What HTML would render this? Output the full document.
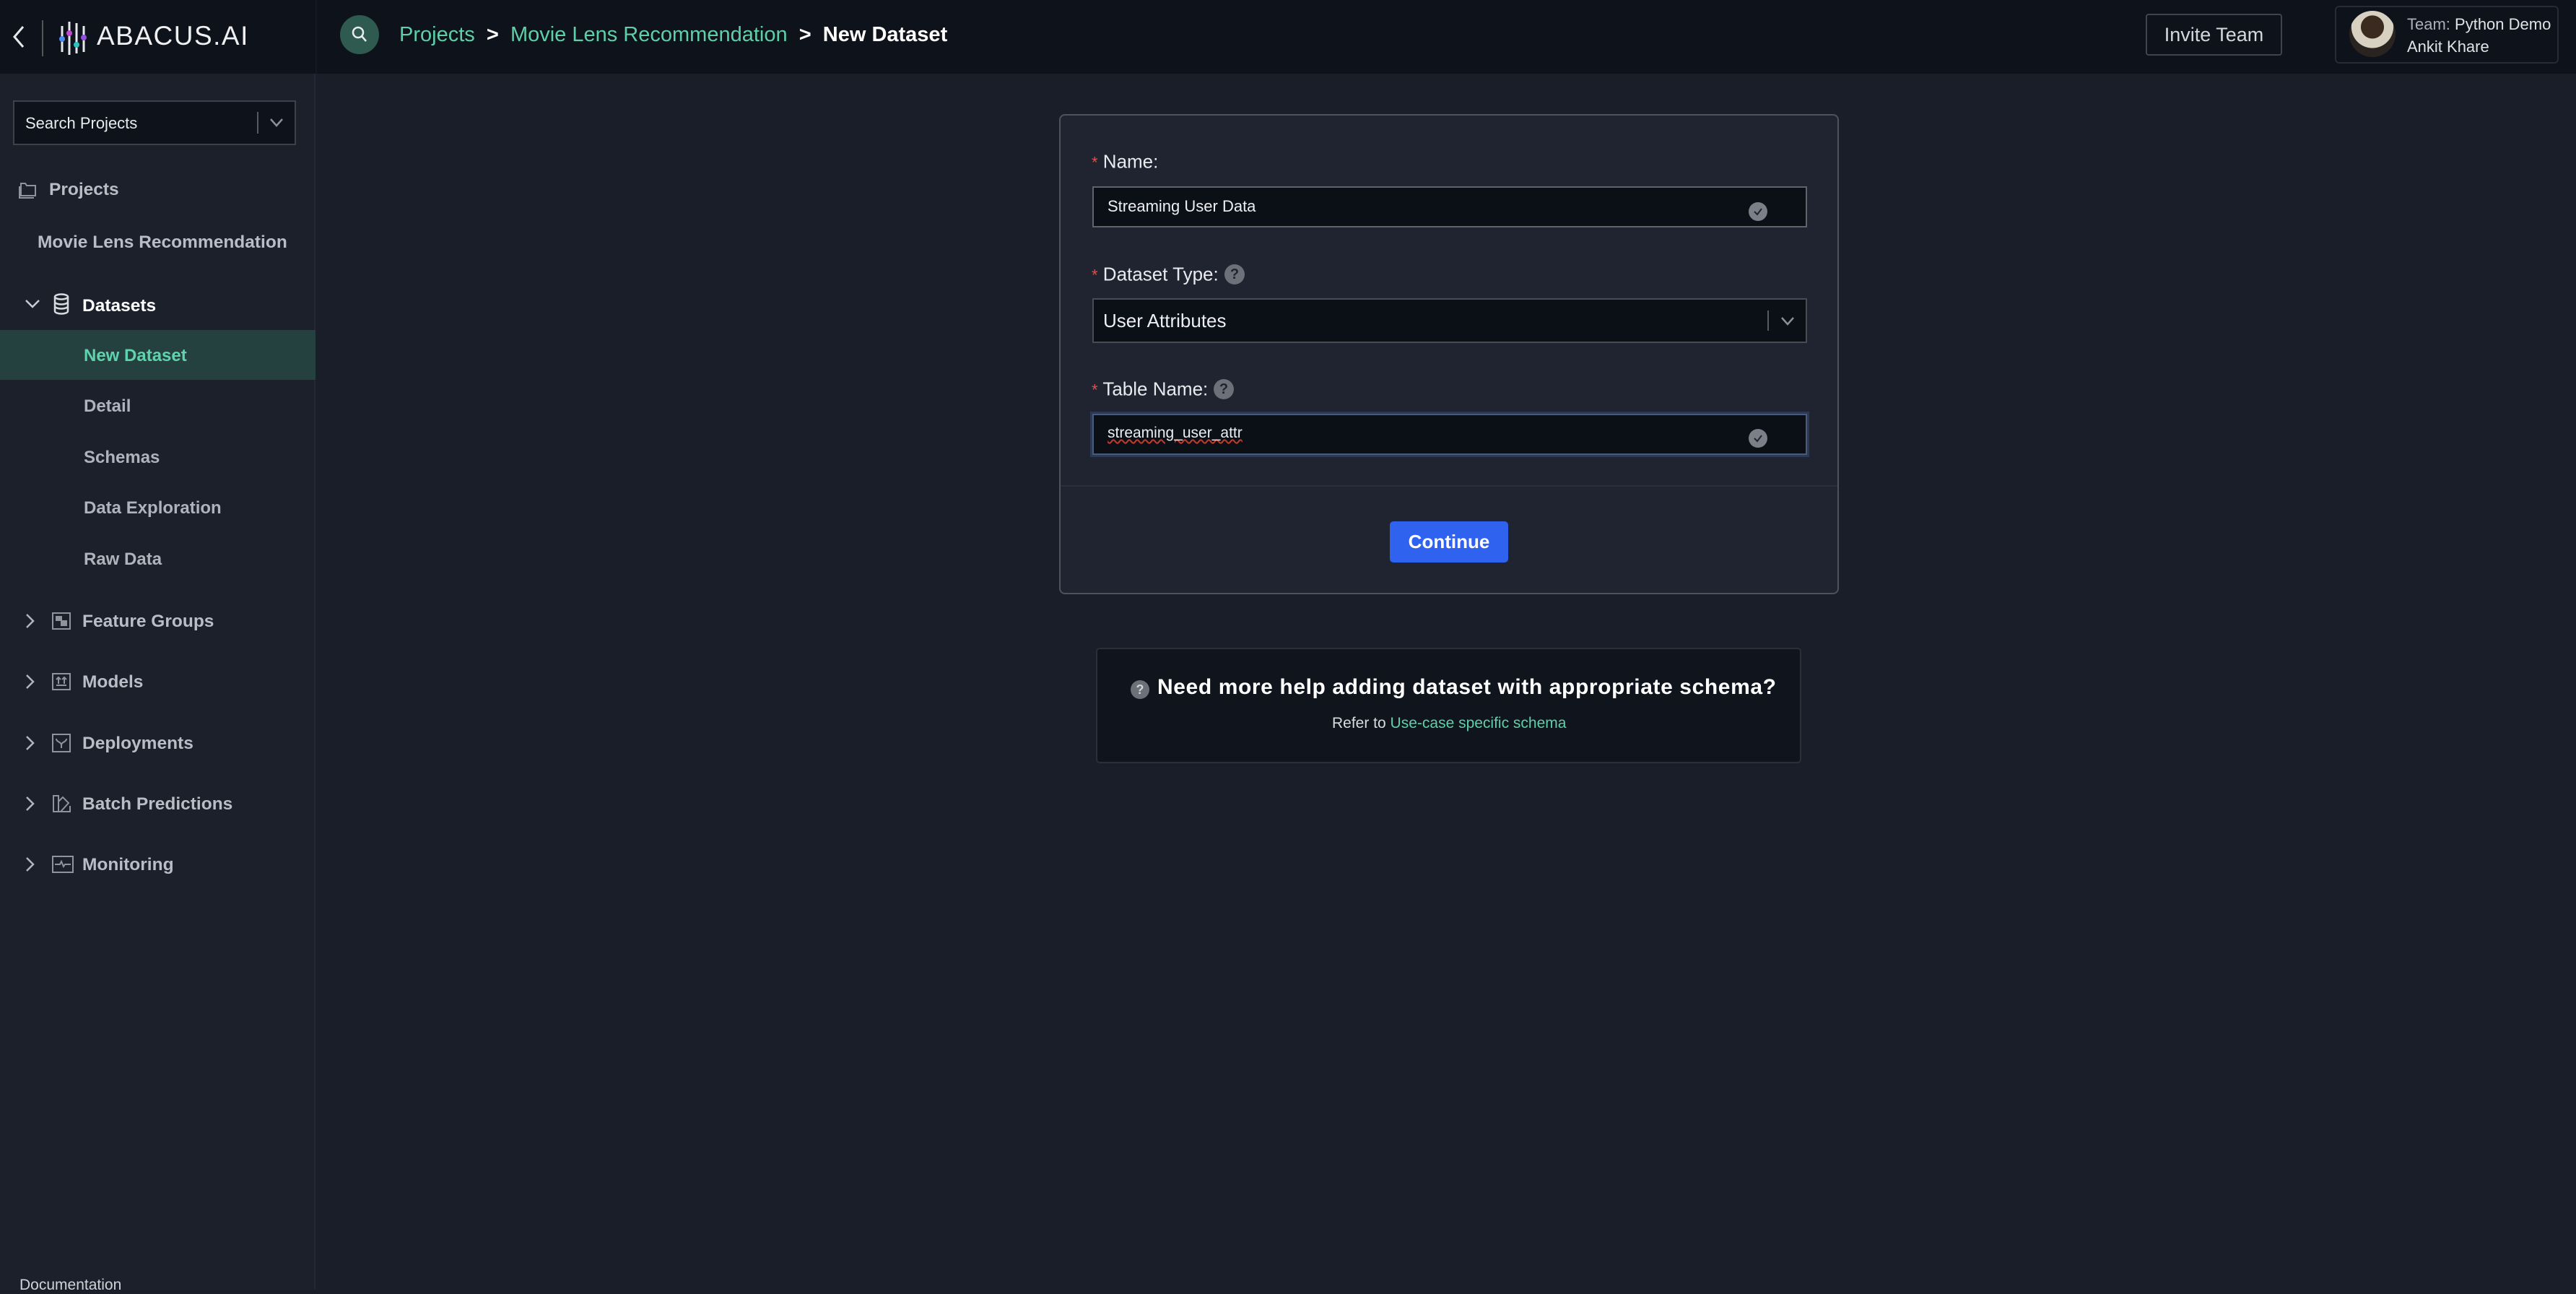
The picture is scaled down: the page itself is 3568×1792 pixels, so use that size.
<!DOCTYPE html>
<html><head><meta charset="utf-8"><style>
*{margin:0;padding:0;box-sizing:border-box}
body{width:3568px;height:1786px;background:#191e28;font-family:"Liberation Sans",sans-serif;position:relative;overflow:hidden;color:#fff}
.a{position:absolute;white-space:nowrap}
.hdr{left:0;top:0;width:3568px;height:102px;background:#0e121a}
.sb{left:0;top:102px;width:437px;height:1684px;background:#1b202b;border-right:2px solid #232834}
.nav{font-size:24.5px;font-weight:bold;color:#b9bdc6;transform:translateY(-50%)}
.sub{font-size:24px;font-weight:bold;color:#aeb3bc;left:116px;transform:translateY(-50%)}
.chev{left:34px;transform:translateY(-50%)}
.ic{left:72px;transform:translateY(-50%)}
.lbl{font-size:26px;color:#e8eaee;transform:translateY(-50%)}
.ast{color:#d9534f;font-size:22px}
.inp{background:#0b0f16;border:2px solid #5e636c}
.q{width:28px;height:28px;border-radius:50%;background:#6b7079;color:#1f2430;font-size:20px;font-weight:bold;text-align:center;line-height:28px}
.ok{width:26px;height:26px;border-radius:50%;background:#7a7f88}
</style></head><body>
<div class="a hdr"></div>
<div class="a" style="left:437px;top:0;width:2px;height:102px;background:#151a22"></div>
<svg class="a" style="left:14px;top:34px" width="24" height="34"><path d="M18 3 L6 17 L18 31" stroke="#e6e8ec" stroke-width="3" fill="none"/></svg>
<div class="a" style="left:58px;top:28px;width:2px;height:50px;background:#555"></div>
<svg class="a" style="left:82px;top:30px" width="40" height="46">
<g stroke="#e6e8ec" stroke-width="3"><line x1="4" y1="6" x2="4" y2="42"/><line x1="14" y1="0" x2="14" y2="46"/><line x1="24" y1="2" x2="24" y2="44"/><line x1="34" y1="6" x2="34" y2="42"/></g>
<circle cx="4" cy="24" r="4" fill="#4a8cf0"/><circle cx="14" cy="16" r="4" fill="#c04ad0"/><circle cx="24" cy="32" r="4" fill="#30c0c0"/><circle cx="34" cy="22" r="4" fill="#9050e0"/></svg>
<div class="a" style="left:134px;top:29px;font-size:37px;letter-spacing:1.5px;color:#f0f0f2">ABACUS.AI</div>
<div class="a" style="left:471px;top:21px;width:54px;height:54px;border-radius:50%;background:#2e5a50"></div>
<svg class="a" style="left:485px;top:34px" width="28" height="28"><circle cx="11" cy="11" r="7" stroke="#e8ecec" stroke-width="2.5" fill="none"/><line x1="16" y1="16" x2="22" y2="23" stroke="#e8ecec" stroke-width="2.5"/></svg>
<div class="a" style="left:553px;top:32px;font-size:29px;color:#5fcfaa">Projects <span style="color:#fff;font-weight:bold">&nbsp;&gt;&nbsp;</span> Movie Lens Recommendation <span style="color:#fff;font-weight:bold">&nbsp;&gt;&nbsp; New Dataset</span></div>
<div class="a" style="left:2972px;top:19px;width:189px;height:58px;border:2px solid #3f444d;border-radius:4px;font-size:27px;color:#d4d7dc;text-align:center;line-height:54px">Invite Team</div>
<div class="a" style="left:3234px;top:8px;width:310px;height:80px;border:2px solid #262b34;border-radius:6px"></div>
<div class="a" style="left:3254px;top:15px;width:64px;height:64px;border-radius:50%;background:radial-gradient(circle at 50% 35%,#3a2a20 0 30%,#d8d0c0 31% 55%,#2a2420 56%)"></div>
<div class="a" style="left:3334px;top:18px;font-size:22px;line-height:31px;color:#e0e2e6"><span style="color:#aab0b8">Team:</span> Python Demo<br>Ankit Khare</div>

<div class="a sb"></div>
<div class="a" style="left:18px;top:139px;width:392px;height:62px;background:#0e121a;border:2px solid #3c414a"></div>
<div class="a" style="left:35px;top:158px;font-size:22px;color:#e8eaee">Search Projects</div>
<div class="a" style="left:356px;top:155px;width:2px;height:30px;background:#555a63"></div>
<svg class="a" style="left:372px;top:162px" width="22" height="16"><path d="M3 3 L11 12 L19 3" stroke="#8a8f98" stroke-width="2.5" fill="none"/></svg>
<svg class="a" style="left:25px;top:248px" width="28" height="28"><path d="M4 6 h6 l2 3 h12 v14 h-20z M2 10 v16 h20" stroke="#8e939c" stroke-width="2" fill="none"/></svg>
<div class="a nav" style="left:68px;top:263px">Projects</div>
<div class="a nav" style="left:52px;top:336px">Movie Lens Recommendation</div>
<svg class="a chev" style="top:421px" width="22" height="16"><path d="M2 3 L11 12 L20 3" stroke="#c8ccd3" stroke-width="2.5" fill="none"/></svg>
<svg class="a" style="left:74px;top:406px" width="22" height="30"><g stroke="#d8dbe0" stroke-width="2.5" fill="none"><ellipse cx="11" cy="5" rx="9" ry="3.5"/><path d="M2 5 v20 a9 3.5 0 0 0 18 0 v-20 M2 12 a9 3.5 0 0 0 18 0 M2 18 a9 3.5 0 0 0 18 0"/></g></svg>
<div class="a nav" style="left:114px;top:424px;color:#fff">Datasets</div>
<div class="a" style="left:0;top:457px;width:437px;height:69px;background:#24403f"></div>
<div class="a sub" style="top:493px;color:#5fd3ad">New Dataset</div>
<div class="a sub" style="top:563px">Detail</div>
<div class="a sub" style="top:634px">Schemas</div>
<div class="a sub" style="top:704px">Data Exploration</div>
<div class="a sub" style="top:775px">Raw Data</div>
<svg class="a chev" style="top:860px" width="16" height="22"><path d="M3 2 L12 11 L3 20" stroke="#b0b4bc" stroke-width="2.5" fill="none"/></svg>
<svg class="a ic" style="top:860px" width="26" height="24"><rect x="1" y="1" width="24" height="22" stroke="#8e939c" stroke-width="2" fill="none"/><rect x="5" y="5" width="9" height="7" fill="#8e939c"/><rect x="12" y="11" width="9" height="8" fill="#8e939c"/></svg>
<div class="a nav" style="left:114px;top:861px">Feature Groups</div>
<svg class="a chev" style="top:944px" width="16" height="22"><path d="M3 2 L12 11 L3 20" stroke="#b0b4bc" stroke-width="2.5" fill="none"/></svg>
<svg class="a ic" style="top:944px" width="26" height="24"><rect x="1" y="1" width="24" height="22" stroke="#8e939c" stroke-width="2" fill="none"/><path d="M6 17 h14 M9 15 v-9 M6 9 l3-3 3 3 M17 15 v-9 M14 9 l3-3 3 3" stroke="#8e939c" stroke-width="2" fill="none"/></svg>
<div class="a nav" style="left:114px;top:945px">Models</div>
<svg class="a chev" style="top:1029px" width="16" height="22"><path d="M3 2 L12 11 L3 20" stroke="#b0b4bc" stroke-width="2.5" fill="none"/></svg>
<svg class="a ic" style="top:1029px" width="26" height="26"><rect x="1" y="1" width="24" height="24" stroke="#8e939c" stroke-width="2" fill="none"/><path d="M6 7 c0 5 7 4 7 9 v4 M20 7 c0 5 -7 4 -7 9" stroke="#8e939c" stroke-width="2" fill="none"/></svg>
<div class="a nav" style="left:114px;top:1030px">Deployments</div>
<svg class="a chev" style="top:1113px" width="16" height="22"><path d="M3 2 L12 11 L3 20" stroke="#b0b4bc" stroke-width="2.5" fill="none"/></svg>
<svg class="a ic" style="top:1113px" width="26" height="26"><path d="M2 2 h7 v22 h-7z M9 10 l6-6 8 8 -11 12 M9 24 h16 v-8" stroke="#8e939c" stroke-width="2" fill="none"/></svg>
<div class="a nav" style="left:114px;top:1114px">Batch Predictions</div>
<svg class="a chev" style="top:1197px" width="16" height="22"><path d="M3 2 L12 11 L3 20" stroke="#b0b4bc" stroke-width="2.5" fill="none"/></svg>
<svg class="a ic" style="top:1197px" width="30" height="24"><rect x="1" y="1" width="28" height="22" stroke="#8e939c" stroke-width="2" fill="none"/><path d="M4 12 h7 l2-4 3 7 2-3 h8" stroke="#8e939c" stroke-width="2" fill="none"/></svg>
<div class="a nav" style="left:114px;top:1198px">Monitoring</div>
<div class="a" style="left:27px;top:1768px;font-size:21px;color:#d0d3d8">Documentation</div>

<div class="a" style="left:1467px;top:158px;width:1080px;height:665px;background:#1f2430;border:2px solid #4d525c;border-radius:8px"></div>
<div class="a lbl" style="left:1512px;top:224px"><span class="ast">*</span> Name:</div>
<div class="a inp" style="left:1513px;top:258px;width:990px;height:57px"></div>
<div class="a" style="left:1534px;top:273px;font-size:22px;color:#eceef1">Streaming User Data</div>
<div class="a ok" style="left:2422px;top:280px"><svg width="26" height="26"><path d="M8 13 l4 4 6-8" stroke="#1f2430" stroke-width="2" fill="none"/></svg></div>
<div class="a lbl" style="left:1512px;top:380px"><span class="ast">*</span> Dataset Type:</div>
<div class="a q" style="left:1696px;top:366px">?</div>
<div class="a inp" style="left:1513px;top:413px;width:990px;height:62px;border-color:#474c55"></div>
<div class="a" style="left:1528px;top:429px;font-size:26px;color:#eceef1">User Attributes</div>
<div class="a" style="left:2448px;top:430px;width:2px;height:28px;background:#555a63"></div>
<svg class="a" style="left:2465px;top:437px" width="22" height="16"><path d="M3 3 L11 12 L19 3" stroke="#8a8f98" stroke-width="2.5" fill="none"/></svg>
<div class="a lbl" style="left:1512px;top:539px"><span class="ast">*</span> Table Name:</div>
<div class="a q" style="left:1681px;top:525px">?</div>
<div class="a inp" style="left:1513px;top:573px;width:990px;height:57px;border-color:#4a5a78;box-shadow:0 0 0 3px #2a3a55"></div>
<div class="a" style="left:1534px;top:588px;font-size:21px;color:#eceef1;text-decoration:underline wavy #c0392b">streaming_user_attr</div>
<div class="a ok" style="left:2422px;top:594px"><svg width="26" height="26"><path d="M8 13 l4 4 6-8" stroke="#1f2430" stroke-width="2" fill="none"/></svg></div>
<div class="a" style="left:1469px;top:672px;width:1076px;height:2px;background:#292e39"></div>
<div class="a" style="left:1925px;top:722px;width:164px;height:57px;background:#2f63ef;border-radius:5px;font-size:26px;font-weight:bold;text-align:center;line-height:57px">Continue</div>

<div class="a" style="left:1518px;top:897px;width:977px;height:160px;background:#10151d;border:2px solid #2a3038;border-radius:5px"></div>
<div class="a q" style="left:1566px;top:942px;width:26px;height:26px;line-height:26px;font-size:18px;color:#d0d3d8;background:#6b7079">?</div>
<div class="a" style="left:1603px;top:935px;font-size:30px;font-weight:bold;letter-spacing:0.6px;color:#fff">Need more help adding dataset with appropriate schema?</div>
<div class="a" style="left:1845px;top:990px;font-size:21px;color:#d8dbe0">Refer to <span style="color:#5fcfaa">Use-case specific schema</span></div>
</body></html>
